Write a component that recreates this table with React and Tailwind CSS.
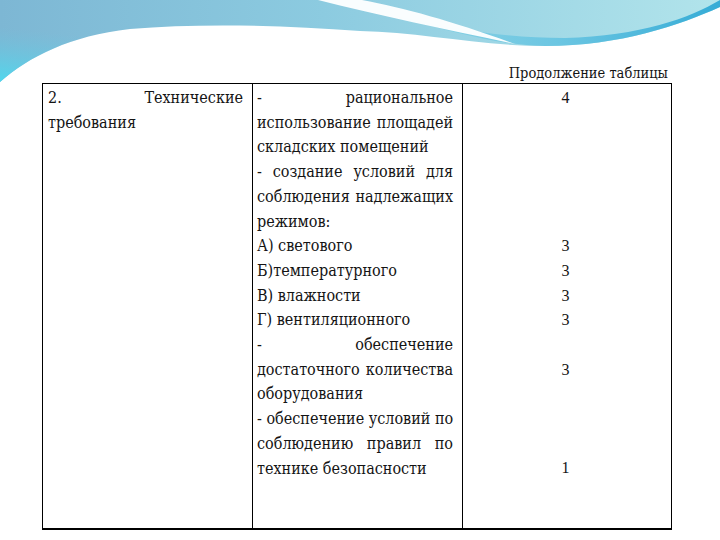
import React from 'react';

const MIDDLE = [
  { t: '- рациональное', j: true },
  { t: 'использование площадей', j: true },
  { t: 'складских помещений' },
  { t: '- создание условий для', j: true },
  { t: 'соблюдения надлежащих', j: true },
  { t: 'режимов:' },
  { t: 'А) светового' },
  { t: 'Б)температурного' },
  { t: 'В) влажности' },
  { t: 'Г) вентиляционного' },
  { t: '- обеспечение', j: true },
  { t: 'достаточного количества', j: true },
  { t: 'оборудования' },
  { t: '- обеспечение условий по', j: true },
  { t: 'соблюдению правил по', j: true },
  { t: 'технике безопасности' },
];

// scores, one per text line of the middle column
const SCORES = ['4', '', '', '', '', '', '3', '3', '3', '3', '', '3', '', '', '', '1'];

function Wave() {
  return (
    <svg className="absolute left-0 top-0" width="720" height="100" viewBox="0 0 720 100">
      <defs>
        <linearGradient id="wv-main" x1="0" y1="0" x2="1" y2="0">
          <stop offset="0" stopColor="#7db7d4" />
          <stop offset="0.45" stopColor="#8ccbe0" />
          <stop offset="1" stopColor="#b2e4eb" />
        </linearGradient>
        <linearGradient id="wv-cyan" x1="0" y1="1" x2="0.35" y2="0">
          <stop offset="0" stopColor="#4fd8ee" stopOpacity="1" />
          <stop offset="0.6" stopColor="#6cc6e0" stopOpacity="0" />
        </linearGradient>
        <linearGradient id="wv-band" x1="0" y1="0" x2="1" y2="0">
          <stop offset="0" stopColor="#8fd4e4" />
          <stop offset="0.5" stopColor="#6cc6e2" />
          <stop offset="1" stopColor="#36acd6" />
        </linearGradient>
      </defs>
      <path
        d="M0,0 H720 V7 C680,25 620,46 545,46 C480,46 420,32 360,31 C280,25 200,23 130,29 C70,36 30,56 0,82 Z"
        fill="url(#wv-main)"
      />
      <path
        d="M0,0 H260 V25 C200,23 130,27 130,29 C70,36 30,56 0,82 Z"
        fill="url(#wv-cyan)"
      />
      <path
        d="M395,16 C455,33 500,45 545,46 C620,46 680,25 720,7 V0 C690,18 640,36 565,38 C500,38 450,28 395,16 Z"
        fill="url(#wv-band)"
      />
      <path d="M318,0 C380,16 450,30 515,44 C455,22 405,8 362,0 Z" fill="#ffffff" fillOpacity="0.95" />
    </svg>
  );
}

function Line({ text, justify }) {
  return (
    <div className={justify ? 'text-justify [text-align-last:justify] whitespace-nowrap' : 'whitespace-nowrap'}>
      {text}
    </div>
  );
}

export default function App() {
  return (
    <div className="relative w-[720px] h-[540px] bg-white overflow-hidden text-[#141414] font-['DejaVu_Serif_Condensed','DejaVu_Serif',serif]">
      <Wave />

      <div className="relative flex flex-col pt-[63px] pl-[42px]">
        {/* caption */}
        <div className="w-[626px] text-right text-[14.5px] leading-[20px]">Продолжение таблицы</div>

        {/* table */}
        <div className="grid grid-cols-[210px_210px_209px] w-[630px] h-[447px] border border-black border-b-2 text-[16px] leading-[24.7px]">
          <div className="pt-[2px] pl-[5px] pr-[9px] border-r border-black">
            <Line text="2. Технические" justify />
            <Line text="требования" />
          </div>

          <div className="pt-[2px] pl-[4px] pr-[9px] border-r border-black">
            {MIDDLE.map((l, i) => (
              <Line key={i} text={l.t} justify={l.j} />
            ))}
          </div>

          <div className="pt-[2px] pr-[4px] text-center font-['Liberation_Serif',serif]">
            {SCORES.map((s, i) => (
              <div key={i} className="h-[24.7px]">{s}</div>
            ))}
          </div>
        </div>
      </div>
    </div>
  );
}
